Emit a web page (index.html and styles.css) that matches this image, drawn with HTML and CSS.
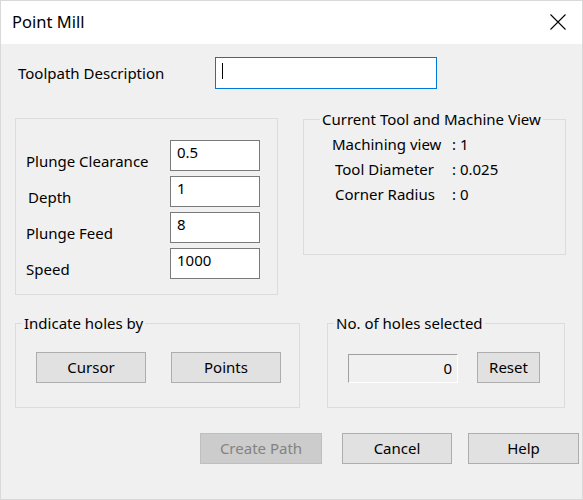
FILE: index.html
```html
<!DOCTYPE html>
<html>
<head>
<meta charset="utf-8">
<link rel="stylesheet" href="styles.css">
</head>
<body>
<div class="window">
  <div class="titlebar">
    <span class="title">Point Mill</span>
    <svg class="close" width="16" height="16" viewBox="0 0 16 16"><path d="M0.5 0.5 L15.5 15.5 M15.5 0.5 L0.5 15.5" stroke="#000" stroke-width="1.1" fill="none"/></svg>
  </div>
  <div class="content">
    <div class="row-desc">
      <span class="desc-label">Toolpath Description</span>
      <div class="text-input focused"><span class="caret"></span></div>
    </div>

    <div class="row-main">
      <div class="group params">
        <div class="param"><span class="plabel">Plunge Clearance</span><div class="field">0.5</div></div>
        <div class="param"><span class="plabel depth">Depth</span><div class="field">1</div></div>
        <div class="param"><span class="plabel">Plunge Feed</span><div class="field">8</div></div>
        <div class="param"><span class="plabel">Speed</span><div class="field">1000</div></div>
      </div>
      <fieldset class="fgroup toolview">
        <legend>Current Tool and Machine View</legend>
        <div class="info"><span class="ilabel">Machining view</span><span>: 1</span></div>
        <div class="info"><span class="ilabel indent">Tool Diameter</span><span>: 0.025</span></div>
        <div class="info"><span class="ilabel indent">Corner Radius</span><span>: 0</span></div>
      </fieldset>
    </div>

    <div class="row-holes">
      <fieldset class="fgroup holes">
        <legend>Indicate holes by</legend>
        <div class="btnrow">
          <button class="btn w110">Cursor</button>
          <button class="btn w110">Points</button>
        </div>
      </fieldset>
      <fieldset class="fgroup count">
        <legend>No. of holes selected</legend>
        <div class="btnrow count-row">
          <div class="display">0</div>
          <button class="btn reset">Reset</button>
        </div>
      </fieldset>
    </div>

    <div class="row-actions">
      <button class="btn disabled create">Create Path</button>
      <button class="btn w110 cancel">Cancel</button>
      <button class="btn help">Help</button>
    </div>
  </div>
</div>
</body>
</html>
```
FILE: styles.css
```css
* { box-sizing: border-box; }
html, body { margin: 0; padding: 0; background: #f0f0f0; }
body { font-family: "Noto Sans", "Segoe UI", sans-serif; font-size: 15px; color: #000; }

.window {
  width: 583px;
  height: 500px;
  border: 1px solid #d9d9d9;
  background: #f0f0f0;
  display: flex;
  flex-direction: column;
}
.titlebar {
  height: 43px;
  background: #fff;
  display: flex;
  align-items: center;
  justify-content: space-between;
  padding: 0 16px 0 11px;
}
.title { font-size: 16.5px; line-height: 20px; margin-top: -1px; }
.close { display: block; margin-top: -1px; }

.content { padding-left: 14px; flex: 1; }

.row-desc {
  display: flex;
  align-items: center;
  margin-top: 13px;
}
.desc-label { width: 200px; padding-left: 3px; line-height: 20px; margin-top: 0; }
.text-input {
  width: 222px;
  height: 32px;
  background: #fff;
  border: 1px solid #7a7a7a;
  padding: 5px 0 0 6px;
}
.text-input.focused { border-color: #0078d7; }
.caret { display: block; width: 1px; height: 16px; background: #000; }

.row-main {
  display: flex;
  align-items: flex-start;
  margin-top: 20px;
}
.group {
  border: 1px solid #dcdcdc;
}
.params {
  width: 263px;
  height: 177px;
  margin-top: 9px;
  padding: 21px 0 0 10px;
  display: flex;
  flex-direction: column;
  gap: 5px;
}
.param { display: flex; align-items: flex-end; }
.plabel { width: 144px; line-height: 18px; padding-bottom: 1px; }
.plabel.depth { padding-left: 2px; }
.field {
  width: 90px;
  height: 31px;
  background: #fff;
  border: 1px solid #7a7a7a;
  padding: 2px 0 0 6px;
  line-height: 18px;
}

.fgroup {
  margin: 0;
  padding: 0;
  border: 1px solid #dcdcdc;
  min-width: 0;
}
.fgroup legend {
  padding: 0 2px;
  line-height: 20px;
}
.toolview {
  width: 263px;
  height: 146px;
  margin-left: 25px;
  padding-top: 5px;
}
.toolview legend { margin-left: 16px; }
.info { display: flex; line-height: 20px; height: 25px; padding-left: 28px; }
.ilabel { width: 120px; }
.ilabel.indent { padding-left: 3px; }

.row-holes {
  display: flex;
  align-items: flex-start;
  margin-top: 18px;
}
.holes { width: 285px; height: 95px; }
.count { width: 238px; height: 95px; margin-left: 27px; }
.holes legend, .count legend { margin-left: 6px; }
.btnrow {
  display: flex;
  gap: 25px;
  padding-left: 20px;
  margin-top: 19px;
}
.count-row { gap: 19px; align-items: flex-end; }

.btn {
  font-family: inherit;
  font-size: 15px;
  color: #000;
  height: 31px;
  background: #e1e1e1;
  border: 1px solid #adadad;
  padding: 0 0 2px 0;
  margin: 0;
  line-height: 18px;
}
.w110 { width: 110px; }
.reset { width: 63px; }
.display {
  width: 110px;
  height: 29px;
  border-top: 1px solid #a0a0a0;
  border-left: 1px solid #a0a0a0;
  border-bottom: 1px solid #fff;
  border-right: 1px solid #fff;
  text-align: right;
  padding: 4px 5px 0 0;
  line-height: 18px;
}

.row-actions {
  display: flex;
  justify-content: flex-end;
  margin-top: 25px;
  padding-right: 3px;
}
.btn.disabled {
  background: #cccccc;
  border-color: #bfbfbf;
  color: #838383;
}
.create { width: 122px; }
.cancel { margin-left: 20px; }
.help { width: 111px; margin-left: 16px; }
```
